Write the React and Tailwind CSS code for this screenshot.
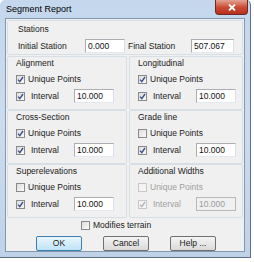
import React from 'react';

const font = { fontFamily: '"Liberation Sans", Arial, sans-serif' };

function Check({ checked, disabled }) {
  return (
    <span
      className={`w-[9px] h-[9px] shrink-0 border flex items-center justify-center ${
        disabled ? 'border-[#c8c8c8] bg-[#f4f4f4]' : 'border-[#8a8a8a] bg-gradient-to-br from-[#dcdcdc] to-[#fbfbfb]'
      }`}
    >
      {checked && (
        <svg width="7" height="7" viewBox="0 0 7 7">
          <path
            d="M1 3.6 L2.8 5.6 L6 1"
            fill="none"
            stroke={disabled ? '#b4b4b4' : '#3d4f8c'}
            strokeWidth="1.4"
          />
        </svg>
      )}
    </span>
  );
}

function Field({ value, disabled, className = '' }) {
  return (
    <span
      className={`h-[14px] border flex items-center pl-[2px] ${
        disabled
          ? 'border-[#b8b8b8] bg-[#f0f0f0] text-[#9a9a9a]'
          : 'border-[#abadb3] border-r-[#dbdfe6] border-b-[#e3e9ef] bg-white text-[#111]'
      } ${className}`}
    >
      {value}
    </span>
  );
}

function Group({ title, unique, interval, disabled }) {
  const tc = disabled ? 'text-[#a0a0a0]' : 'text-[#1a1a1a]';
  return (
    <div className="border border-[#d5dfe5] rounded-[2px] pl-[8px] pt-[1px] flex flex-col">
      <div className="h-[11px] leading-[11px] text-[#1a1a1a]">{title}</div>
      <div className="mt-[5px] h-[11px] flex items-center gap-[3px]">
        <Check checked={unique} disabled={disabled} />
        <span className={`leading-[11px] ${tc}`}>Unique Points</span>
      </div>
      <div className="mt-[4px] h-[14px] flex items-center">
        <Check checked={interval} disabled={disabled} />
        <span className={`ml-[6px] w-[43px] ${tc}`}>Interval</span>
        <Field value="10.000" disabled={disabled} className="w-[40px]" />
      </div>
    </div>
  );
}

function Button({ label, primary }) {
  return (
    <span
      className={`w-[46px] h-[15px] rounded-[2px] border flex items-center justify-center text-[#1a1a1a] ${
        primary
          ? 'border-[#3c7fb1] bg-gradient-to-b from-[#eaf6fd] to-[#bfe3f7]'
          : 'border-[#707070] bg-gradient-to-b from-[#f4f4f4] to-[#dadada]'
      }`}
    >
      {label}
    </span>
  );
}

export default function App() {
  return (
    <div className="w-[254px] h-[262px] bg-white" style={font}>
      <div className="w-[251px] h-[258px] rounded-t-[5px] border-r border-b border-[#5d6f84] bg-gradient-to-b from-[#c4d7ec] via-[#ccdcee] to-[#bfd2e7] flex flex-col px-[5px] pb-[5px]">
        {/* title bar */}
        <div className="h-[19px] flex items-start justify-between">
          <span className="mt-[4px] ml-[1px] text-[9px] leading-[11px] text-black">Segment Report</span>
          <span className="w-[33px] h-[15px] -mr-[3px] rounded-b-[4px] border border-[#6e2a22] border-t-0 bg-gradient-to-b from-[#e3a394] via-[#cc4c38] to-[#b7301b] flex items-center justify-center">
            <svg width="8" height="7" viewBox="0 0 8 7">
              <path d="M1 0.5 L7 6.5 M7 0.5 L1 6.5" stroke="white" strokeWidth="1.8" />
            </svg>
          </span>
        </div>

        {/* client area */}
        <div className="flex-1 bg-[#f0f0f0] border border-[#8297b0] px-[1px] pt-[1px] flex flex-col text-[8.5px]">
          <div className="border border-[#d5dfe5] rounded-[2px] h-[35px] pl-[10px] pt-[3px]">
            <div className="h-[11px] leading-[11px] text-[#1a1a1a]">Stations</div>
            <div className="mt-[4px] grid grid-cols-[110px_1fr] items-center text-[#1a1a1a]">
              <div className="flex items-center">
                <span className="w-[67px]">Initial Station</span>
                <Field value="0.000" className="w-[40px]" />
              </div>
              <div className="flex items-center">
                <span className="w-[63px]">Final Station</span>
                <Field value="507.067" className="w-[43px]" />
              </div>
            </div>
          </div>

          <div className="mt-[1px] grid grid-cols-[120px_1fr] gap-x-[2px] auto-rows-[54px]">
            <Group title="Alignment" unique interval />
            <Group title="Longitudinal" unique interval />
            <Group title="Cross-Section" unique interval />
            <Group title="Grade line" interval />
            <Group title="Superelevations" interval />
            <Group title="Additional Widths" interval disabled />
          </div>

          <div className="mt-[2px] h-[11px] flex items-center gap-[3px] pl-[74px] text-[#1a1a1a]">
            <Check />
            <span>Modifies terrain</span>
          </div>

          <div className="mt-[5px] flex items-center pl-[29px] gap-[21px]">
            <Button label="OK" primary />
            <Button label="Cancel" />
            <Button label="Help ..." />
          </div>
        </div>
      </div>
    </div>
  );
}
